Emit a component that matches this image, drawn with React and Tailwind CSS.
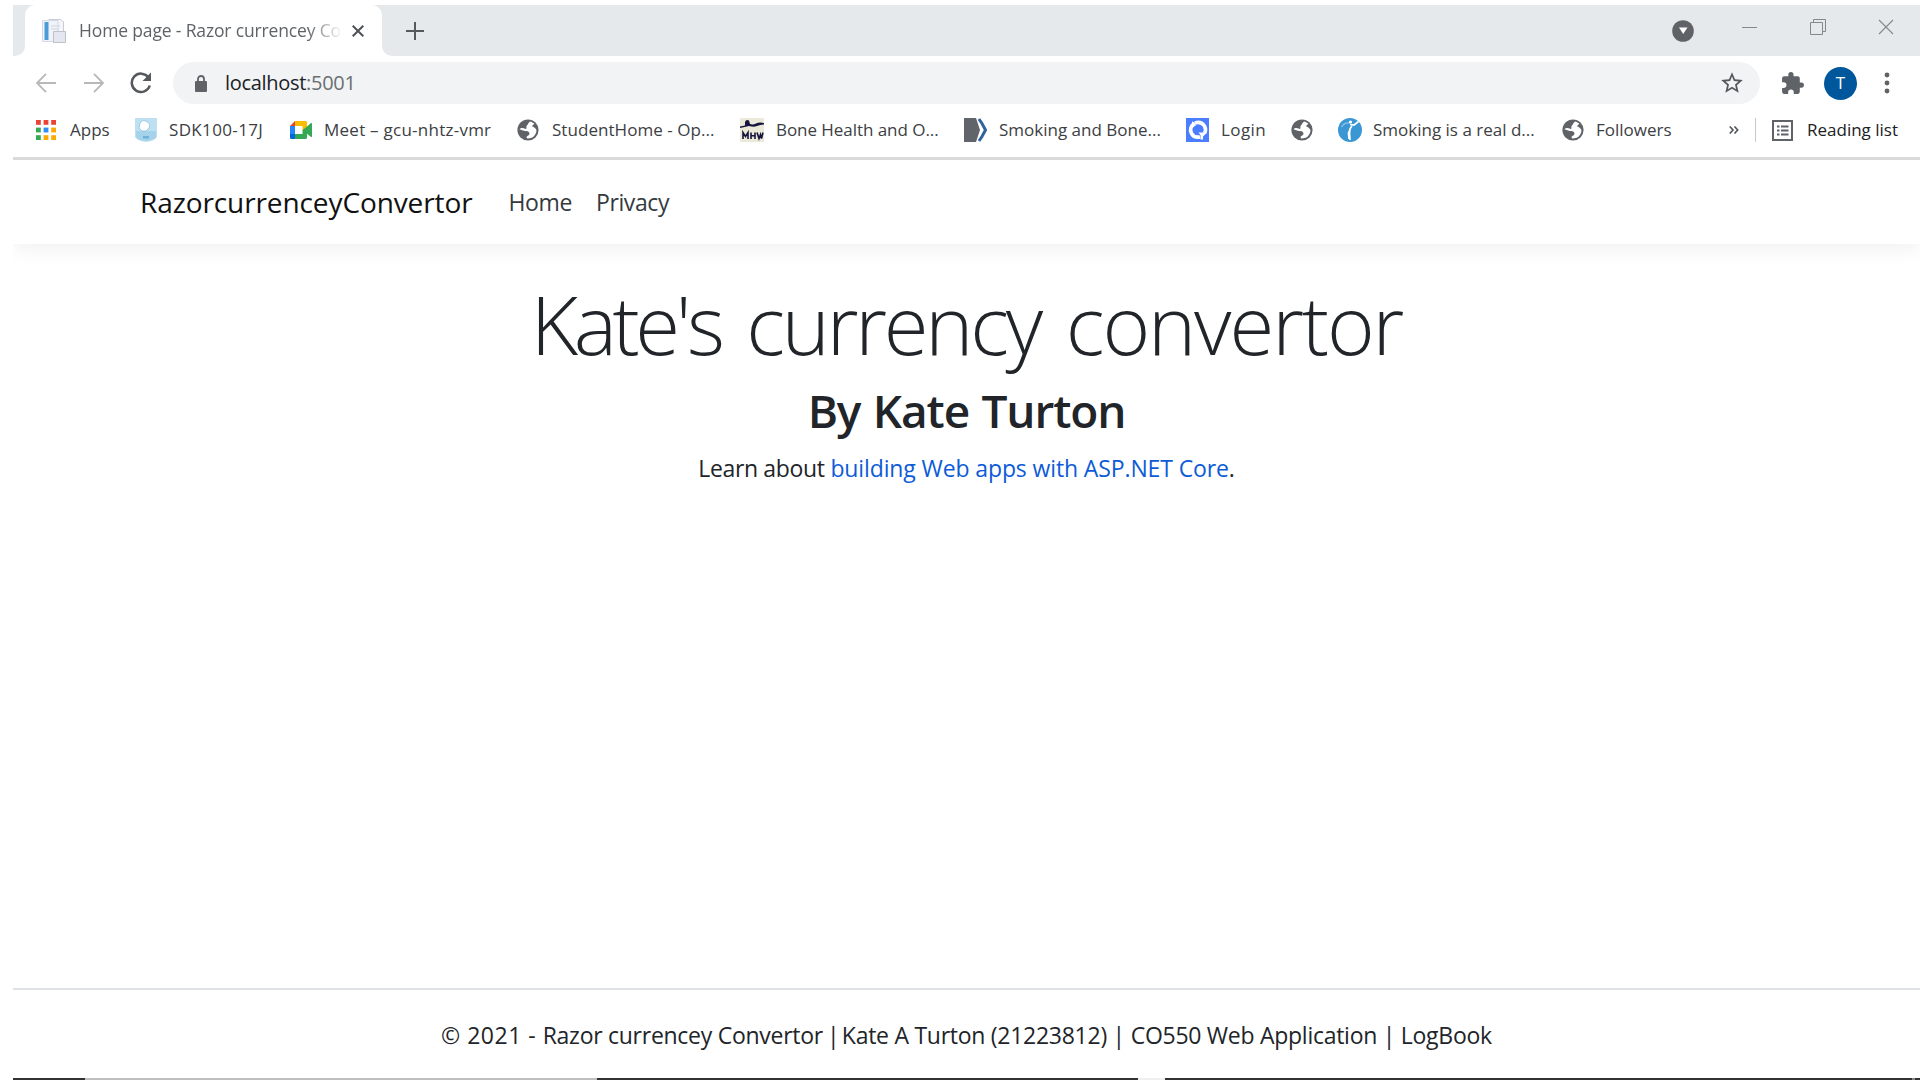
import React from "react";

function Globe() {
  return (
    <svg viewBox="0 0 22 22" className="h-[22px] w-[22px]">
      <circle cx="11" cy="11" r="10.6" fill="#5f6368" />
      <path d="M2.4 10.2C4 8.5 6 8.6 7.6 9.6c1.6 1 2 .2 1.8-1.4C9.1 6.2 11 6.4 11.2 4.6L13 2.6c1.5.4 3.4 1.2 4.3 2.2l-2.500 2.400c2 .6 3.900 2 4.700 4-.1 3-1.800 6-4.800 7.600l-3.700.8c-1.600-.3-2-1.700-.6-2.600 2-1 2.800-2.600 1.400-4-1.500-1.200-3.200-.6-5-1.200-1.600-.4-2.800-1-4.400-1.600z" fill="#fff" />
    </svg>
  );
}

const icons = {
  apps: (
    <svg viewBox="0 0 20 20" className="h-5 w-5">
      {["#ea4335", "#ea4335", "#ea4335", "#34a853", "#2f8df5", "#f9ab00", "#34a853", "#f9ab00", "#f9ab00"].map((c, i) => (
        <rect key={i} x={(i % 3) * 7.6} y={Math.floor(i / 3) * 7.6} width="4.8" height="4.8" fill={c} />
      ))}
    </svg>
  ),
  badge: (
    <svg viewBox="0 0 22 24" className="h-6 w-[22px]">
      <path d="M0 0H22V19Q20 23 11 24Q2 23 0 19Z" fill="#bfe0f1" />
      <path d="M1 13H21V19Q19 22 11 23Q3 22 1 19Z" fill="#a3d2ea" />
      <path d="M5 5q2-4 6-2 5 2 3 7l-3 3H7L4 10z" fill="#fff" stroke="#9acce5" strokeWidth="1" />
      <path d="M8 18h6v2.500H8z" fill="#6fb2da" />
    </svg>
  ),
  meet: (
    <svg viewBox="0 0 22 18" className="h-[18px] w-[22px]">
      <path d="M0 5L5 0V5Z" fill="#ea4335" />
      <path d="M5 0H16Q17 0 17 1.5V9H12.5V5H5Z" fill="#fbbc04" />
      <path d="M0 5H5V13H0Z" fill="#2684fc" />
      <path d="M0 13H5V18H1.5Q0 18 0 16.5Z" fill="#0066da" />
      <path d="M5 13H12.5V9L17 5.5 21 2Q22 1.5 22 3V15Q22 16.5 21 16L17 12.7V16.5Q17 18 15.5 18H5Z" fill="#34a853" />
    </svg>
  ),
  globe: <Globe />,
  mhv: (
    <svg viewBox="0 0 24 24" className="h-6 w-6">
      <rect width="24" height="24" fill="#ece9d8" />
      <path d="M5 4q1-3 4-1.500l1 3.500q3 1 6-.5t8-.5v1.500q-4 0-7 1.500t-8 0q-4 1-9 2V8.500l5-1z" fill="#15153f" />
      <path d="M3 21v-6.500l2.500 4 2.500-4V21M11 14.500V21M11 17.800h4M15 14.500V21M17 14.500l2 6 1.500-4 1 4 1.500-6" fill="none" stroke="#15153f" strokeWidth="1.600" />
    </svg>
  ),
  arrow: (
    <svg viewBox="0 0 24 24" className="h-6 w-6">
      <path d="M0 0H12L16 12L12 24H0Z" fill="#62646b" />
      <path d="M15 1L18 5.500 21.500 12L18 18.500 15 23" fill="none" stroke="#2f639f" strokeWidth="3" />
    </svg>
  ),
  login: (
    <svg viewBox="0 0 23 24" className="h-6 w-[23px]">
      <rect width="23" height="24" fill="#4a7dff" />
      <path d="M9 5.500A7 7 0 0 0 5.500 15.500Q8 20 14 19" fill="none" stroke="#fff" strokeWidth="3.600" />
      <path d="M9 5Q15 3 18.500 8Q20.500 12 18.500 15" fill="none" stroke="#fff" strokeWidth="3.600" />
      <path d="M12.500 14.500H21L17 18.500V21.500H14.500V17z" fill="#fff" />
      <path d="M6 3v7l4-3z" fill="#fff" />
    </svg>
  ),
  runner: (
    <svg viewBox="0 0 24 24" className="h-6 w-6">
      <circle cx="12" cy="12" r="12" fill="#3b97d3" />
      <path d="M3.500 9q3-5 8-4" fill="none" stroke="#8cc4e8" strokeWidth="1.200" />
      <path d="M12 6.500l4 .5 4.500-3.500M14 8q-3 3-2.500 7l.5 7M12 12l-1.500 3 .5 6" fill="none" stroke="#fff" strokeWidth="1.700" />
      <circle cx="12.500" cy="4" r="1.600" fill="#fff" />
    </svg>
  ),
};

const bookmarks = [
  { icon: "apps", label: "Apps", cell: "w-[99px]", text: "ml-[14px]" },
  { icon: "badge", label: "SDK100-17J", cell: "w-[155px]", text: "ml-[12px] tracking-[0.35px]" },
  { icon: "meet", label: "Meet – gcu-nhtz-vmr", cell: "w-[227px]", text: "ml-[12px] tracking-[0.25px]" },
  { icon: "globe", label: "StudentHome - Op...", cell: "w-[223px]", text: "ml-[13px] tracking-[0.05px]" },
  { icon: "mhv", label: "Bone Health and O...", cell: "w-[224px]", text: "ml-[12px] tracking-[-0.05px]" },
  { icon: "arrow", label: "Smoking and Bone...", cell: "w-[222px]", text: "ml-[11px]" },
  { icon: "login", label: "Login", cell: "w-[105px]", text: "ml-[12px] tracking-[0.4px]" },
  { icon: "globe", label: "", cell: "w-[47px]", text: "" },
  { icon: "runner", label: "Smoking is a real d...", cell: "w-[224px]", text: "ml-[11px]" },
  { icon: "globe", label: "Followers", cell: "w-[166px]", text: "ml-[12px]" },
];

function TabStrip() {
  return (
    <div className="flex h-[51px] shrink-0 bg-white">
      <div className="w-3 rounded-br-[10px] bg-[#e5e9ec]" />
      <div className="flex w-[357px] bg-[#e5e9ec]">
        <div className="flex w-full items-center rounded-t-[10px] bg-white pl-[17px]">
          <svg viewBox="0 0 24 24" className="h-6 w-6 shrink-0">
            <path d="M7 .5H19L21.5 3V16H7Z" fill="#f5f6fa" stroke="#c9ccd6" />
            <path d="M.5 1.5H16V22.500H.5Z" fill="#f1f3f9" stroke="#d5d8e2" />
            <rect x="2.500" y="3" width="4" height="18" fill="#4b9bd8" />
            <path d="M9 7h9M9 10h8" stroke="#d0d3de" />
            <path d="M11.500 12.500H23.500V23.500H11.500Z" fill="#e4e7f0" stroke="#bdc1ce" />
          </svg>
          <div className="ml-[13px] w-[262px] whitespace-nowrap text-[17.5px] tracking-[-0.15px] text-[#5f6368] [mask-image:linear-gradient(to_right,black_228px,transparent_264px)]">
            Home page - Razor currencey Co
          </div>
          <svg viewBox="0 0 12 12" className="ml-[11px] h-3 w-3"><path d="M.7 .7L11.300 11.300M11.300 .7L.7 11.300" stroke="#4f5357" strokeWidth="2" /></svg>
        </div>
      </div>
      <div className="flex flex-1 items-center rounded-bl-[10px] bg-[#e5e9ec]">
        <svg viewBox="0 0 20 20" className="ml-[23px] h-5 w-5"><path d="M10 1V19M1 10H19" stroke="#55595d" strokeWidth="2" /></svg>
        <svg viewBox="0 0 22 22" className="ml-auto h-[22px] w-[22px]"><circle cx="11" cy="11" r="10.800" fill="#5f6368" /><path d="M7 7.500h8.500L11.200 14z" fill="#fff" /></svg>
        <svg viewBox="0 0 16 16" className="mb-2 ml-12 h-4 w-4"><path d="M0 8.500H15" stroke="#85888b" /></svg>
        <svg viewBox="0 0 16 16" className="mb-2 ml-[52px] h-4 w-4"><path d="M.5 3.500V15.500H12.500V3.500H.5M3.500 3V.5H15.500V12.500H13" fill="none" stroke="#85888b" /></svg>
        <svg viewBox="0 0 16 16" className="mb-2 ml-[52px] mr-[26px] h-4 w-4"><path d="M1 1L15 15M15 1L1 15" stroke="#85888b" strokeWidth="1.100" /></svg>
      </div>
    </div>
  );
}

function AddressBar() {
  return (
    <div className="flex h-[54px] shrink-0 items-center">
      <svg viewBox="0 0 20 20" className="ml-[23px] h-5 w-5"><path d="M20 10H1.500M10 .8L1 10L10 19.200" fill="none" stroke="#b6b8ba" strokeWidth="1.800" /></svg>
      <svg viewBox="0 0 20 20" className="ml-7 h-5 w-5"><path d="M0 10H18.500M10 .8L19 10L10 19.200" fill="none" stroke="#b6b8ba" strokeWidth="1.800" /></svg>
      <svg viewBox="0 0 22 22" className="ml-[26px] h-[22px] w-[22px]"><path d="M18.500 5.500A9.200 9.200 0 1 0 19.800 13.500" fill="none" stroke="#55595d" strokeWidth="2.500" /><path d="M21 .5V9H12.500Z" fill="#55595d" /></svg>
      <div className="ml-[21px] flex h-[42px] w-[1587px] items-center rounded-full bg-[#f1f3f4]">
        <svg viewBox="0 0 12 17" className="ml-[22px] h-[17px] w-3"><rect y="6" width="12" height="11" rx="1" fill="#5f6368" /><path d="M3 7V4a3 3 0 0 1 6 0v3" fill="none" stroke="#5f6368" strokeWidth="1.800" /></svg>
        <span className="ml-[18px] text-[20px] leading-none tracking-[-0.3px] text-[#202124]">localhost<span className="text-[#6b6f73]">:5001</span></span>
        <svg viewBox="0 0 24 24" className="ml-auto mr-[15px] h-[26px] w-[26px]"><path fill="#55595d" d="M22 9.240l-7.190-.62L12 2 9.190 8.630 2 9.240l5.460 4.730L5.820 21 12 17.270 18.180 21l-1.630-7.030L22 9.240zM12 15.400l-3.760 2.270 1-4.280-3.320-2.880 4.380-.38L12 6.100l1.710 4.040 4.380.38-3.320 2.880 1 4.280L12 15.400z" /></svg>
      </div>
      <svg viewBox="0 0 24 24" className="ml-5 h-[25px] w-[25px]"><path fill="#5f6368" d="M20.500 11H19V7c0-1.100-.9-2-2-2h-4V3.500a2.500 2.500 0 0 0-5 0V5H4c-1.100 0-2 .9-2 2v3.800h1.500a2.700 2.700 0 0 1 0 5.400H2V20c0 1.100.9 2 2 2h3.800v-1.500a2.700 2.700 0 0 1 5.400 0V22H17c1.100 0 2-.9 2-2v-4h1.500a2.500 2.500 0 0 0 0-5z" /></svg>
      <div className="ml-[19px] flex h-[33px] w-[33px] items-center justify-center rounded-full bg-[#00579b] text-[17px] text-white">T</div>
      <svg viewBox="0 0 6 22" className="ml-[27px] h-[22px] w-1.5"><circle cx="3" cy="3" r="2.400" fill="#5f6368" /><circle cx="3" cy="11" r="2.400" fill="#5f6368" /><circle cx="3" cy="19" r="2.400" fill="#5f6368" /></svg>
    </div>
  );
}

function BookmarksBar() {
  return (
    <div className="flex h-[50px] shrink-0 items-center border-b-[3px] border-[#dadada] pb-[7px] pl-[23px] text-[17px] text-[#3c4043]">
      {bookmarks.map((b, i) => (
        <div key={i} className={"flex shrink-0 items-center whitespace-nowrap " + b.cell}>
          {icons[b.icon]}
          {b.label && <span className={b.text}>{b.label}</span>}
        </div>
      ))}
      <svg viewBox="0 0 10 8" className="ml-px h-2 w-[10px]"><path d="M.8 .5L4 4L.8 7.500M5.500 .5L8.700 4L5.500 7.500" fill="none" stroke="#4f5357" strokeWidth="1.600" /></svg>
      <div className="ml-4 h-6 w-px bg-[#c6c8ca]" />
      <svg viewBox="0 0 21 21" className="ml-4 h-[21px] w-[21px]"><path d="M1 1H20V20H1Z" fill="none" stroke="#5f6368" strokeWidth="2" /><path d="M5 6.500h2.500M5 10.500h2.500M5 14.500h2.500M9 6.500h7.500M9 10.500h7.500M9 14.500h7.500" stroke="#5f6368" strokeWidth="2" /></svg>
      <span className="ml-[14px] whitespace-nowrap text-[#202124]">Reading list</span>
    </div>
  );
}

export default function App() {
  return (
    <div className={'flex h-[1080px] w-[1920px] flex-col overflow-hidden bg-white pl-[13px] pt-[5px] font-["Open_Sans",sans-serif] text-[#212529]'}>
      <TabStrip />
      <AddressBar />
      <BookmarksBar />
      <div className="-mb-[40px] h-[124px] shrink-0 overflow-hidden">
        <nav className="flex h-[84px] items-center pl-[127px] shadow-[0_6px_18px_rgba(0,0,0,0.055)]">
          <span className="text-[28px] tracking-[-0.1px] text-[#111]">RazorcurrenceyConvertor</span>
          <span className="ml-9 text-[23px] tracking-[-0.4px] text-[#343a40]">Home</span>
          <span className="ml-6 text-[23px] tracking-[-0.4px] text-[#343a40]">Privacy</span>
        </nav>
      </div>
      <main className="flex flex-1 flex-col items-center pt-[30px]">
        <h1 className="whitespace-nowrap text-[81.5px] font-light leading-[100px] tracking-[-2.4px] [word-spacing:7px]">
          <span className="tracking-[-4.4px]">Kate's</span> <span className="tracking-[-3.2px]">currency</span> <span className="tracking-[-2.1px]">convertor</span>
        </h1>
        <h2 className="mt-2 text-[46px] font-semibold leading-[56px] tracking-[-1.1px] [word-spacing:1.5px]">By Kate Turton</h2>
        <p className="mt-[12px] text-[23px] leading-9 tracking-[-0.17px]"><span className="tracking-[-0.35px]">Learn about</span> <a className="tracking-[-0.12px] text-[#0d5bd7]">building Web apps with ASP.NET Core</a>.</p>
      </main>
      <footer className="flex h-[90px] shrink-0 items-center justify-center border-t-2 border-[#dee2e6] pt-[3px] text-[23px] tracking-[-0.27px]">
        <p className="whitespace-nowrap">
          <span className="tracking-[0.5px]">© 2021 - </span>Razor currencey Convertor<span className="tracking-[-1.9px]"> | </span>Kate A Turton (21223812) | CO550 Web Application | LogBook
        </p>
      </footer>
      <div className="flex h-0.5 shrink-0 bg-[#333]">
        <div className="ml-[72px] w-[512px] bg-[#bfbfbf]" />
        <div className="ml-[541px] w-[27px] bg-[#f0f0f0]" />
        <div className="ml-[747px] w-[3px] bg-[#888]" />
      </div>
    </div>
  );
}
